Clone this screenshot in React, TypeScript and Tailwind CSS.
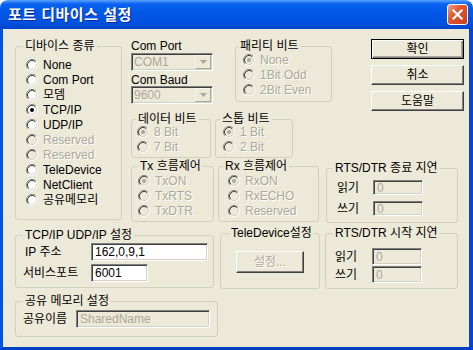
import React from 'react';

type RadioProps = { label: string; checked?: boolean; disabled?: boolean };

const Radio: React.FC<RadioProps> = ({ label, checked = false, disabled = false }) => (
  <div className="flex h-[15px] items-center gap-[5px]">
    <svg width="12" height="12" viewBox="0 0 12 12" className="shrink-0">
      <circle cx="6" cy="6" r="5" fill={disabled ? '#ece9d8' : '#ffffff'} />
      <path d="M2.11 9.89A5.5 5.5 0 0 1 9.89 2.11" fill="none" stroke="#808080" />
      <path d="M9.89 2.11A5.5 5.5 0 0 1 2.11 9.89" fill="none" stroke="#ffffff" />
      <path d="M2.82 9.18A4.5 4.5 0 0 1 9.18 2.82" fill="none" stroke="#404040" />
      <path d="M9.18 2.82A4.5 4.5 0 0 1 2.82 9.18" fill="none" stroke="#d4d0c8" />
      {checked && <circle cx="6" cy="6" r="2" fill={disabled ? '#aca899' : '#000000'} />}
    </svg>
    <span className={disabled ? 'text-[#aca899] [text-shadow:1px_1px_0_#ffffff]' : 'text-black'}>{label}</span>
  </div>
);

type GroupProps = { title: string; legendClass: string; className: string; bodyClass: string; children?: React.ReactNode };

const Group: React.FC<GroupProps> = ({ title, legendClass, className, bodyClass, children }) => (
  <fieldset className={`shrink-0 rounded-[3px] border border-[#d0d0bf] ${className}`}>
    <legend className={`px-[2px] leading-[12px] ${legendClass}`}>{title}</legend>
    <div className={bodyClass}>{children}</div>
  </fieldset>
);

const Edit: React.FC<{ value: string; disabled?: boolean; className: string }> = ({ value, disabled = false, className }) => (
  <div
    className={`flex shrink-0 items-center border border-t-[#808080] border-l-[#808080] border-b-white border-r-white pl-[3px] shadow-[inset_1px_1px_0_#404040,inset_-1px_-1px_0_#d4d0c8] ${
      disabled ? 'bg-[#ece9d8] text-[#aca899]' : 'bg-white text-black'
    } ${className}`}
  >
    {value}
  </div>
);

const Combo: React.FC<{ value: string }> = ({ value }) => (
  <div className="flex h-[18px] w-[82px] items-stretch border border-t-[#808080] border-l-[#808080] border-b-white border-r-white bg-[#ece9d8] p-[1px] shadow-[inset_1px_1px_0_#404040,inset_-1px_-1px_0_#d4d0c8]">
    <span className="flex flex-1 items-center pl-[1px] text-[#aca899]">{value}</span>
    <div className="flex w-[16px] items-center justify-center border border-t-[#f4f3ee] border-l-[#f4f3ee] border-b-[#aca899] border-r-[#aca899] bg-[#ece9d8]">
      <svg width="7" height="4" viewBox="0 0 7 4">
        <path d="M0 0h7L3.5 4z" fill="#aca899" />
      </svg>
    </div>
  </div>
);

const PushButton: React.FC<{ label: string; isDefault?: boolean; disabled?: boolean; className: string }> = ({
  label,
  isDefault = false,
  disabled = false,
  className,
}) => (
  <div
    className={`flex shrink-0 items-center justify-center bg-[#ece9d8] ${
      isDefault
        ? 'border border-black shadow-[inset_1px_1px_0_#ffffff,inset_-1px_-1px_0_#808080,inset_-2px_-2px_0_#aca899]'
        : 'border border-t-white border-l-white border-b-[#404040] border-r-[#404040] shadow-[inset_-1px_-1px_0_#808080]'
    } ${disabled ? 'text-[#aca899] [text-shadow:1px_1px_0_#ffffff]' : 'text-black'} ${className}`}
  >
    {label}
  </div>
);

const DelayRow: React.FC<{ label: string; labelClass: string; editClass: string }> = ({ label, labelClass, editClass }) => (
  <div className="flex items-center">
    <span className={labelClass}>{label}</span>
    <Edit value="0" disabled className={editClass} />
  </div>
);

export default function App() {
  return (
    <div className="h-[350px] w-[473px] overflow-hidden bg-white font-['Liberation_Sans','Noto_Sans_CJK_KR',sans-serif] text-[12px] leading-[14px] text-black">
      {/* title bar */}
      <div className="flex h-[29px] items-center justify-between rounded-t-[8px] bg-[linear-gradient(to_bottom,#5aa2ff_0px,#0a62f0_4px,#0058e8_12px,#0052e2_22px,#0044cc_29px)] pl-[8px] pr-[5px]">
        <span className="text-[15px] font-bold tracking-[0.5px] text-white [text-shadow:1px_1px_0_#0a2a9a]">포트 디바이스 설정</span>
        <div className="flex h-[21px] w-[21px] items-center justify-center rounded-[3px] border border-white bg-[linear-gradient(135deg,#f3a084_0%,#e0582e_40%,#c8401a_100%)]">
          <svg width="11" height="11" viewBox="0 0 11 11">
            <path d="M1.5 1.5L9.5 9.5M9.5 1.5L1.5 9.5" stroke="#ffffff" strokeWidth="2.2" strokeLinecap="square" />
          </svg>
        </div>
      </div>

      {/* body */}
      <div className="flex h-[321px] flex-col border-l-[3px] border-r-[4px] border-b-[3px] border-l-[#0054e3] border-r-[#0046d0] border-b-[#0040c4] bg-[#ece9d8]">
        <div className="flex items-start pt-[10px]">
          <Group title="디바이스 종류" legendClass="ml-[7px]" className="ml-[12px] mt-[1px] h-[180px] w-[107px]" bodyClass="pl-[10px] pt-[5px]">
            <Radio label="None" />
            <Radio label="Com Port" />
            <Radio label="모뎀" />
            <Radio label="TCP/IP" checked />
            <Radio label="UDP/IP" />
            <Radio label="Reserved" disabled />
            <Radio label="Reserved" disabled />
            <Radio label="TeleDevice" />
            <Radio label="NetClient" />
            <Radio label="공유메모리" />
          </Group>

          <div className="ml-[9px] flex flex-col">
            <div className="flex h-[72px] items-start">
              <div className="mt-[1px] flex w-[82px] flex-col">
                <span className="leading-[12px]">Com Port</span>
                <div className="mt-[1px]">
                  <Combo value="COM1" />
                </div>
                <span className="mt-[3px] leading-[12px]">Com Baud</span>
                <Combo value="9600" />
              </div>
              <Group title="패리티 비트" legendClass="ml-[2px]" className="ml-[22px] mt-[1px] h-[62px] w-[97px]" bodyClass="pl-[7px]">
                <Radio label="None" checked disabled />
                <Radio label="1Bit Odd" disabled />
                <Radio label="2Bit Even" disabled />
              </Group>
              <div className="ml-[39px] flex w-[93px] flex-col gap-[6px]">
                <PushButton label="확인" isDefault className="h-[20px] w-[93px]" />
                <PushButton label="취소" className="h-[20px] w-[93px]" />
                <PushButton label="도움말" className="h-[20px] w-[93px]" />
              </div>
            </div>

            <div className="mt-[2px] flex items-start">
              <Group title="데이터 비트" legendClass="ml-[4px]" className="h-[45px] w-[80px]" bodyClass="-mt-[1px] pl-[5px]">
                <Radio label="8 Bit" checked disabled />
                <Radio label="7 Bit" disabled />
              </Group>
              <Group title="스톱 비트" legendClass="ml-[4px]" className="ml-[4px] h-[45px] w-[78px]" bodyClass="-mt-[1px] pl-[7px]">
                <Radio label="1 Bit" checked disabled />
                <Radio label="2 Bit" disabled />
              </Group>
            </div>

            <div className="mt-[2px] flex items-start">
              <Group title="Tx 흐름제어" legendClass="ml-[6px]" className="h-[62px] w-[83px]" bodyClass="pl-[6px] pt-[1px]">
                <Radio label="TxON" checked disabled />
                <Radio label="TxRTS" disabled />
                <Radio label="TxDTR" disabled />
              </Group>
              <Group title="Rx 흐름제어" legendClass="ml-[4px]" className="ml-[4px] h-[62px] w-[101px]" bodyClass="pl-[9px] pt-[1px]">
                <Radio label="RxON" checked disabled />
                <Radio label="RxECHO" disabled />
                <Radio label="Reserved" disabled />
              </Group>
              <Group title="RTS/DTR 종료 지연" legendClass="ml-[6px]" className="ml-[7px] mt-[2px] h-[61px] w-[132px]" bodyClass="flex flex-col gap-[6px] pl-[10px] pt-[6px]">
                <DelayRow label="읽기" labelClass="w-[36px]" editClass="h-[15px] w-[50px]" />
                <DelayRow label="쓰기" labelClass="w-[36px]" editClass="h-[15px] w-[50px]" />
              </Group>
            </div>
          </div>
        </div>

        <div className="mt-[4px] flex items-start">
          <div className="ml-[12px] flex w-[203px] flex-col">
            <Group title="TCP/IP UDP/IP 설정" legendClass="ml-[7px]" className="mt-[2px] h-[59px] w-[199px]" bodyClass="flex flex-col gap-[3px] pl-[7px] pt-[2px]">
              <div className="flex items-center">
                <span className="w-[68px] pl-[2px]">IP 주소</span>
                <Edit value="162,0,9,1" className="h-[18px] w-[117px]" />
              </div>
              <div className="flex items-center">
                <span className="w-[68px]">서비스포트</span>
                <Edit value="6001" className="h-[18px] w-[57px]" />
              </div>
            </Group>
            <Group title="공유 메모리 설정" legendClass="ml-[7px]" className="mt-[7px] h-[42px] w-[203px]" bodyClass="flex items-center pl-[7px] pt-[3px]">
              <span className="w-[53px]">공유이름</span>
              <Edit value="SharedName" disabled className="h-[18px] w-[134px]" />
            </Group>
          </div>

          <Group title="TeleDevice설정" legendClass="ml-[8px]" className="ml-[2px] h-[62px] w-[100px]" bodyClass="pl-[15px] pt-[12px]">
            <PushButton label="설정..." disabled className="h-[22px] w-[68px]" />
          </Group>

          <Group title="RTS/DTR 시작 지연" legendClass="ml-[7px]" className="ml-[5px] h-[62px] w-[133px]" bodyClass="flex flex-col gap-[1px] pl-[9px] pt-[9px]">
            <DelayRow label="읽기" labelClass="w-[37px]" editClass="h-[17px] w-[50px]" />
            <DelayRow label="쓰기" labelClass="w-[37px]" editClass="h-[17px] w-[50px]" />
          </Group>
        </div>
      </div>
    </div>
  );
}
